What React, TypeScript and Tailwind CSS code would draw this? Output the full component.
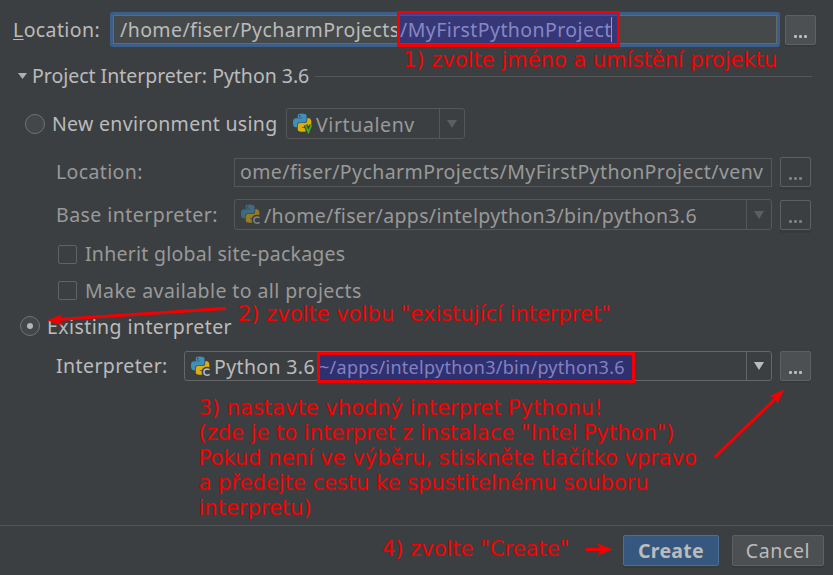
import type { ReactNode } from "react";

function PythonIcon({ badge, dim }: { badge: "V" | "C"; dim?: boolean }) {
  return (
    <svg width="20" height="21" viewBox="0 0 20 21" className={dim ? "shrink-0 opacity-55" : "shrink-0"}>
      <g transform="translate(0 0.6) scale(0.76)">
        <path
          fill="#3f8fb8"
          d="M14.25.18l.9.2.73.26.59.3.45.32.34.34.25.34.16.33.1.3.04.26.02.2-.01.13V8.5l-.05.63-.13.55-.21.46-.26.38-.3.31-.33.25-.35.19-.35.14-.33.1-.3.07-.26.04-.21.02H8.77l-.69.05-.59.14-.5.22-.41.27-.33.32-.27.35-.2.36-.15.37-.1.35-.07.32-.04.27-.02.21v3.06H3.17l-.21-.03-.28-.07-.32-.12-.35-.18-.36-.26-.36-.36-.35-.46-.32-.59-.28-.73-.21-.88-.14-1.05-.05-1.23.06-1.22.16-1.04.24-.87.32-.71.36-.57.4-.44.42-.33.42-.24.4-.16.36-.1.32-.05.24-.01h.16l.06.01h8.16v-.83H6.18l-.01-2.75-.02-.37.05-.34.11-.31.17-.28.25-.26.31-.23.38-.2.44-.18.51-.15.58-.12.64-.1.71-.06.77-.04.84-.02 1.27.05zm-6.3 1.98l-.23.33-.08.41.08.41.23.34.33.22.41.09.41-.09.33-.22.23-.34.08-.41-.08-.41-.23-.33-.33-.22-.41-.09-.41.09z"
        />
        <path
          fill="#dcae0a"
          d="M21.1 6.11l.28.06.32.12.35.18.36.27.36.35.35.47.32.59.28.73.21.88.14 1.04.05 1.23-.06 1.23-.16 1.04-.24.86-.32.71-.36.57-.4.45-.42.33-.42.24-.4.16-.36.09-.32.05-.24.02-.16-.01h-8.22v.82h5.84l.01 2.76.02.36-.05.34-.11.31-.17.29-.25.25-.31.24-.38.2-.44.17-.51.15-.58.13-.64.09-.71.07-.77.04-.84.01-1.27-.04-1.07-.14-.9-.2-.73-.25-.59-.3-.45-.33-.34-.34-.25-.34-.16-.33-.1-.3-.04-.25-.02-.2.01-.13v-5.34l.05-.64.13-.54.21-.46.26-.38.3-.32.33-.24.35-.2.35-.14.33-.1.3-.06.26-.04.21-.02.13-.01h5.84l.69-.05.59-.14.5-.21.41-.28.33-.32.27-.35.2-.36.15-.36.1-.35.07-.32.04-.28.02-.21V6.07h2.09l.14.01z"
        />
      </g>
      {badge === "C" ? (
        <g fill="none" transform="translate(0 0.6)">
          <path stroke="#3c3f41" strokeWidth="4.5" d="M18.6 13.2 Q17.6 12.3 15.9 12.3 Q12.9 12.5 12.9 15.5 Q12.9 18.5 15.9 18.6 Q17.6 18.6 18.6 17.8" />
          <path stroke="#b4bac0" strokeWidth="1.5" d="M18.6 13.2 Q17.6 12.3 15.9 12.3 Q12.9 12.5 12.9 15.5 Q12.9 18.5 15.9 18.6 Q17.6 18.6 18.6 17.8" />
        </g>
      ) : (
        <g fill="none" transform="translate(0 0.6)">
          <path stroke="#3c3f41" strokeWidth="4" d="M12.6 11.5 L15.4 18.5 L18.2 11.5" />
          <path stroke="#3fae1f" strokeWidth="1.8" d="M12.4 11.3 L15.4 18.6 L18.4 11.3" />
        </g>
      )}
    </svg>
  );
}

function Triangle({ className }: { className: string }) {
  return (
    <svg width="10" height="8" viewBox="0 0 10 8" className={className}>
      <path d="M0 0H10L5 8Z" fill="currentColor" />
    </svg>
  );
}

function Browse({ active }: { active?: boolean }) {
  return (
    <button
      type="button"
      className={
        active
          ? "flex h-[30px] w-[31px] shrink-0 items-end justify-center gap-[2px] rounded-[2px] border border-[#5e6162] bg-[#4c5052] pb-[6px] shadow-[0_2px_0_#37393a]"
          : "flex h-[30px] w-[31px] shrink-0 items-end justify-center gap-[2px] rounded-[2px] border border-[#5e6162] pb-[6px] shadow-[0_3px_0_#37393a]"
      }
    >
      {[0, 1, 2].map((i) => (
        <span key={i} className={active ? "size-[3px] rounded-[1px] bg-[#bbbbbb]" : "size-[3px] rounded-[1px] bg-[#7c7e7f]"} />
      ))}
    </button>
  );
}

function Combo({ className, active, children }: { className: string; active?: boolean; children: ReactNode }) {
  return (
    <div className={`flex items-stretch rounded-[3px] border ${active ? "border-[#646667]" : "border-[#555759]"} ${className}`}>
      <div className="flex min-w-0 grow items-center pl-[6px] whitespace-nowrap">{children}</div>
      <div className={`flex w-[25px] shrink-0 items-center justify-center border-l ${active ? "border-[#646667]" : "border-[#555759]"}`}>
        <Triangle className={active ? "text-[#bbbbbb]" : "text-[#5c5e60]"} />
      </div>
    </div>
  );
}

function Check({ children }: { children: ReactNode }) {
  return (
    <div className="flex h-5 items-center gap-[7px] pl-[59px] text-[#999999]">
      <span className="-ml-px mr-px size-[19px] rounded-[2px] border border-[#606263]" />
      {children}
    </div>
  );
}

const note = "absolute font-['DejaVu_Sans',sans-serif] text-[21px] leading-[25px] whitespace-nowrap text-[#f50000]";

export default function App() {
  return (
    <div className="relative flex h-[575px] w-[833px] flex-col overflow-hidden bg-[#3c3f41] font-['Noto_Sans',sans-serif] text-[19.5px] leading-[26px] whitespace-nowrap text-[#bbbbbb]">
      <div className="flex grow flex-col pt-[12px]">
        <div className="flex h-[35px] items-center">
          <label className="w-[110px] pl-[13px] tracking-[0.4px]">
            <span className="underline decoration-1 underline-offset-2">L</span>ocation:
          </label>
          <div className="h-[35px] w-[670px] rounded-[3px] bg-[#3b5f8a] p-[3px]">
            <div className="flex h-full items-center border border-[#646a6d] bg-[#45494a] pl-[6px]">
              <span className="w-[280px] tracking-[0.41px]">/home/fiser/PycharmProjects</span>
              <span className="tracking-[0.42px]">/MyFirstPythonProject</span>
              <span className="-ml-px h-[25px] w-px bg-[#d0d0d0]" />
            </div>
          </div>
          <div className="ml-[5px] flex h-[29px] items-center">
            <Browse active />
          </div>
        </div>

        <div className="mt-[14px] flex h-[30px] items-center pl-[18px]">
          <svg width="9" height="6" viewBox="0 0 9 6" className="text-[#b0b0b0]">
            <path d="M0 0H9L4.5 6Z" fill="currentColor" />
          </svg>
          <span className="ml-[5px] w-[283px] tracking-[-0.02px]">Project Interpreter: Python 3.6</span>
          <span className="h-px w-[497px] bg-[#555759]" />
        </div>

        <div className="mt-[17px] flex h-[31px] items-center pl-[25px]">
          <span className="size-[20px] rounded-full border border-[#717374] bg-[#43474a]" />
          <span className="ml-[7px] w-[234px] tracking-[0.3px]">New environment using</span>
          <Combo className="h-[31px] w-[179px]">
            <PythonIcon badge="V" />
            <span className="ml-[3px] pt-[2px] tracking-[0.6px] text-[#999999]">Virtualenv</span>
          </Combo>
        </div>

        <div className="mt-[18px] flex h-[30px] items-center pl-[56px] text-[#999999]">
          <span className="w-[178px] tracking-[0.37px]">Location:</span>
          <div className="mr-[8px] flex h-[29px] w-[538px] items-center border border-[#555759] pl-[5px]">
            <span className="tracking-[0.42px]">ome/fiser/PycharmProjects/MyFirstPythonProject/venv</span>
          </div>
          <Browse />
        </div>

        <div className="mt-[12px] flex h-[31px] items-center pl-[56px] text-[#999999]">
          <span className="w-[178px] tracking-[0.46px]">Base interpreter:</span>
          <Combo className="mr-[8px] h-[31px] w-[538px]">
            <PythonIcon badge="C" dim />
            <span className="ml-[3px] pt-[2px] tracking-[0.35px]">/home/fiser/apps/intelpython3/bin/python3.6</span>
          </Combo>
          <Browse />
        </div>

        <div className="mt-[14px] flex flex-col gap-4">
          <Check>
            <span className="tracking-[0.25px]">Inherit global site-packages</span>
          </Check>
          <Check>
            <span className="pt-px tracking-[0.42px]">Make available to all projects</span>
          </Check>
        </div>

        <div className="mt-[16px] flex h-[20px] items-center pl-[20px]">
          <span className="flex size-[20px] items-center justify-center rounded-full border border-[#717374] bg-[#43474a]">
            <span className="size-[6px] rounded-full bg-[#b4b4b4]" />
          </span>
          <span className="ml-[7px] pt-[2px] tracking-[0.42px]">Existing interpreter</span>
        </div>

        <div className="mt-[15px] flex h-[30px] items-center pl-[56px]">
          <span className="w-[128px] tracking-[0.42px]">Interpreter:</span>
          <Combo active className="mr-[8px] h-[30px] w-[588px]">
            <PythonIcon badge="C" />
            <span className="ml-[3px] w-[105px] pt-[2px] tracking-[0.37px]">Python 3.6</span>
            <span className="pt-[2px] text-[18px] tracking-[0.28px] text-[#b4b4b4]">~/apps/intelpython3/bin/python3.6</span>
          </Combo>
          <Browse active />
        </div>
      </div>

      <div className="flex h-[50px] shrink-0 items-start justify-end gap-[13px] border-t border-[#515456] pt-[9px] pr-[9px]">
        <button type="button" className="h-[31px] w-[96px] rounded-[2px] border border-[#4a6f93] bg-[#365880] font-bold tracking-[0.3px] shadow-[0_2px_0_#37393a]">
          Create
        </button>
        <button type="button" className="h-[31px] w-[92px] rounded-[2px] border border-[#5e6162] bg-[#4c5052] tracking-[0.6px] shadow-[0_2px_0_#37393a]">
          Cancel
        </button>
      </div>

      <div className="absolute top-[11px] left-[397px] h-[36px] w-[223px] border-3 border-[#f50000] bg-[rgba(15,12,222,0.3)]" />
      <div className="absolute top-[352px] left-[317px] h-[31px] w-[318px] border-3 border-[#f50000] bg-[rgba(15,12,222,0.3)]" />
      <p className={`${note} top-[48px] left-[403px]`}>1) zvolte jméno a umístění projektu</p>
      <p className={`${note} top-[302px] left-[238px]`}>2) zvolte volbu "existující interpret"</p>
      <p className={`${note} top-[396px] left-[198.5px]`}>
        3) nastavte vhodný interpret Pythonu!
        <br />
        (zde je to interpret z instalace "Intel Python")
        <br />
        Pokud není ve výběru, stiskněte tlačítko vpravo
        <br />
        a předejte cestu ke spustitelnému souboru
        <br />
        interpretu)
      </p>
      <p className={`${note} top-[537px] left-[382px]`}>4) zvolte "Create"</p>
      <svg className="absolute inset-0" width="833" height="575" viewBox="0 0 833 575">
        <g stroke="#f50000" strokeWidth="3" strokeLinecap="round">
          <path d="M224.5 308.5L58 319.5" />
          <path d="M715.5 456.5L776 398" />
          <path d="M586.5 549.5H603" />
        </g>
        <g fill="#f50000">
          <path d="M47 320.5L62.5 314L58.5 319.5L63 325.5Z" />
          <path d="M784 389.5L777.5 404L775.5 398L769.5 396Z" />
          <path d="M612.5 549.5L597.5 555.5L601 549.5L597.5 543.5Z" />
        </g>
      </svg>
    </div>
  );
}
